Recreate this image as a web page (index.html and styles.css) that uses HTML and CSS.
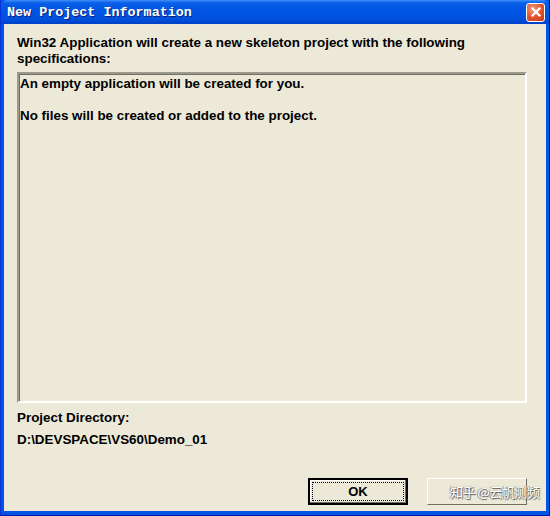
FILE: index.html
```html
<!DOCTYPE html>
<html lang="en">
  <head>
    <link rel="stylesheet" href="styles.css">
  </head>
  <body>
    <div class="window">
      <div class="titlebar">
        <span class="title">New Project Information</span>
        <span class="close">
          <svg width="14" height="14" viewBox="0 0 14 14">
            <path d="M3.5 3.5 L10.5 10.5 M10.5 3.5 L3.5 10.5" stroke="#fff" stroke-width="2.2" stroke-linecap="square" />
          </svg>
        </span>
      </div>
      <div class="content">
        <p class="intro">Win32 Application will create a new skeleton project with the following specifications:</p>
        <div class="specs">
          <p>An empty application will be created for you.</p>
          <p>No files will be created or added to the project.</p>
        </div>
        <p class="label">Project Directory:</p>
        <p class="path">D:\DEVSPACE\VS60\Demo_01</p>
        <div class="buttons">
          <button class="btn default"><span class="focus">OK</span></button>
          <button class="btn cancel"><span class="mark">知乎 @云帆测频</span></button>
        </div>
      </div>
    </div>
  </body>
</html>
```

FILE: styles.css
```css
body {
  margin: 0;
  width: 550px;
  height: 516px;
  overflow: hidden;
  font-family: "Liberation Sans", Arial, sans-serif;
}

p {
  margin: 0;
}

.window {
  box-sizing: border-box;
  width: 550px;
  height: 516px;
  display: flex;
  flex-direction: column;
  background: #0054e3;
  border-left: 1px solid #0831d9;
  border-right: 1px solid #001ea0;
  border-bottom: 1px solid #001ea0;
  padding: 0 3px 4px 3px;
}

.titlebar {
  height: 24px;
  margin: 0 -3px;
  padding: 0 4px 0 6px;
  display: flex;
  align-items: center;
  justify-content: space-between;
  background: linear-gradient(#3d8ef8 0%, #0a5fe8 12%, #0054e3 45%, #0050dc 80%, #0040c8 100%);
  border-radius: 6px 6px 0 0;
}

.title {
  color: white;
  font-family: "Liberation Mono", "DejaVu Sans Mono", monospace;
  font-weight: bold;
  font-size: 13.4px;
  text-shadow: 1px 1px 0 #0a1e7a;
}

.close {
  width: 19px;
  height: 19px;
  box-sizing: border-box;
  border: 1px solid #fff;
  border-radius: 3px;
  background: radial-gradient(circle at 35% 30%, #f19b7c, #e2512b 55%, #c23a1a);
  display: flex;
  align-items: center;
  justify-content: center;
}

.content {
  flex: 1;
  background: #ece9d8;
  padding: 11px 19px 0 13px;
  display: flex;
  flex-direction: column;
  font-weight: bold;
  font-size: 13.4px;
  color: #000;
}

.intro {
  line-height: 16px;
  padding-right: 40px;
}

.specs {
  margin-top: 5px;
  height: 323px;
  border: 2px solid;
  border-color: #9d9a8d #fff #fff #9d9a8d;
  box-shadow: inset 1px 1px 0 #716f64;
  padding: 2px 1px;
  display: flex;
  flex-direction: column;
  gap: 16px;
  line-height: 16px;
}

.label {
  margin-top: 7px;
  line-height: 16px;
}

.path {
  margin-top: 6px;
  line-height: 16px;
}

.buttons {
  margin-top: auto;
  margin-bottom: 6px;
  display: flex;
  justify-content: flex-end;
  gap: 19px;
}

.btn {
  width: 100px;
  height: 27px;
  padding: 2px;
  background: #ece9d8;
  border: 1px solid;
  border-color: #fff #716f64 #716f64 #fff;
  font-family: inherit;
  font-weight: bold;
  font-size: 13px;
  color: #000;
}

.btn.default {
  border: 2px solid #000;
  box-shadow: inset -1px -1px 0 #716f64, inset 1px 1px 0 #fff;
}

.focus {
  display: flex;
  align-items: center;
  justify-content: center;
  height: 100%;
  box-sizing: border-box;
  border: 1px dotted #000;
}

.cancel {
  position: relative;
  overflow: visible;
  font-family: "Noto Sans CJK SC", sans-serif;
  font-weight: normal;
}

.mark {
  position: absolute;
  left: 22px;
  top: 3px;
  color: #fff;
  font-size: 13px;
  letter-spacing: -0.5px;
  text-shadow: 1px 1px 1px #555, -1px 0 1px #777;
  white-space: nowrap;
}
```
